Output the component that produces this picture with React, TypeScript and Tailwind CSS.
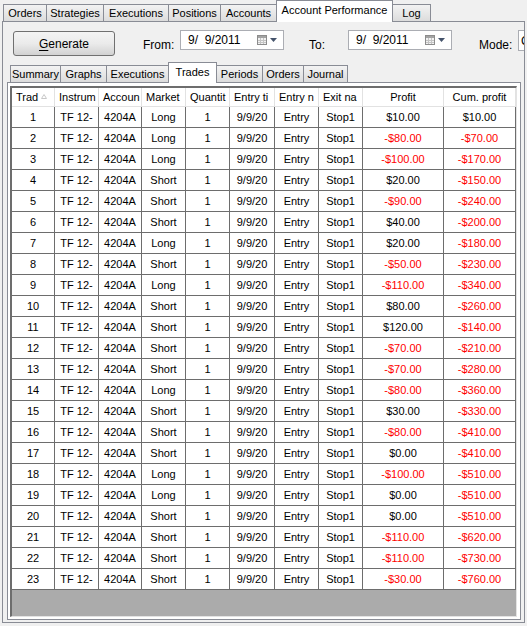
import React from 'react';

interface Trade {
  id: number;
  market: 'Long' | 'Short';
  profit: number;
  cum: number;
}

const trades: Trade[] = [
  { id: 1, market: 'Long', profit: 10, cum: 10 },
  { id: 2, market: 'Long', profit: -80, cum: -70 },
  { id: 3, market: 'Long', profit: -100, cum: -170 },
  { id: 4, market: 'Short', profit: 20, cum: -150 },
  { id: 5, market: 'Short', profit: -90, cum: -240 },
  { id: 6, market: 'Short', profit: 40, cum: -200 },
  { id: 7, market: 'Long', profit: 20, cum: -180 },
  { id: 8, market: 'Short', profit: -50, cum: -230 },
  { id: 9, market: 'Long', profit: -110, cum: -340 },
  { id: 10, market: 'Short', profit: 80, cum: -260 },
  { id: 11, market: 'Short', profit: 120, cum: -140 },
  { id: 12, market: 'Short', profit: -70, cum: -210 },
  { id: 13, market: 'Short', profit: -70, cum: -280 },
  { id: 14, market: 'Long', profit: -80, cum: -360 },
  { id: 15, market: 'Short', profit: 30, cum: -330 },
  { id: 16, market: 'Short', profit: -80, cum: -410 },
  { id: 17, market: 'Short', profit: 0, cum: -410 },
  { id: 18, market: 'Long', profit: -100, cum: -510 },
  { id: 19, market: 'Long', profit: 0, cum: -510 },
  { id: 20, market: 'Short', profit: 0, cum: -510 },
  { id: 21, market: 'Short', profit: -110, cum: -620 },
  { id: 22, market: 'Short', profit: -110, cum: -730 },
  { id: 23, market: 'Short', profit: -30, cum: -760 },
];

const money = (v: number) => (v < 0 ? `-$${Math.abs(v).toFixed(2)}` : `$${v.toFixed(2)}`);

const topTabs = [
  { label: 'Orders', w: 'w-[44px]' },
  { label: 'Strategies', w: 'w-[58px]' },
  { label: 'Executions', w: 'w-[66px]' },
  { label: 'Positions', w: 'w-[53px]' },
  { label: 'Accounts', w: 'w-[57px]' },
  { label: 'Account Performance', w: 'w-[117px]', active: true },
  { label: 'Log', w: 'w-[39px]' },
];

const subTabs = [
  { label: 'Summary', w: 'w-[51px]' },
  { label: 'Graphs', w: 'w-[47px]' },
  { label: 'Executions', w: 'w-[63px]' },
  { label: 'Trades', w: 'w-[49px]', active: true },
  { label: 'Periods', w: 'w-[47px]' },
  { label: 'Orders', w: 'w-[42px]' },
  { label: 'Journal', w: 'w-[45px]' },
];

const columns = ['Trad', 'Instrum', 'Accoun', 'Market', 'Quantit', 'Entry ti', 'Entry n', 'Exit na', 'Profit', 'Cum. profit'];

const gridCols = 'grid grid-cols-[43px_44px_43px_44px_44px_45px_44px_44px_81px_72px]';

const Tab = ({ label, w, active, tall }: { label: string; w: string; active?: boolean; tall: string }) => (
  <div
    className={
      active
        ? `${w} ${tall} relative z-10 -mb-px -ml-px flex shrink-0 items-center justify-center border border-b-0 border-[#898c95] bg-white pb-[2px] whitespace-nowrap`
        : `${w} -ml-px flex shrink-0 items-center justify-center border border-b-0 border-[#898c95] bg-linear-to-b from-[#f3f3f3] to-[#dcdcdc] whitespace-nowrap first:ml-0`
    }
  >
    {label}
  </div>
);

const CalendarIcon = () => (
  <div className="flex items-center gap-[3px]">
    <svg width="10" height="10" viewBox="0 0 10 10">
      <rect x="0.5" y="0.5" width="9" height="9" fill="#f2f2f2" stroke="#8c8c8c" />
      <rect x="1" y="1" width="8" height="2" fill="#a3a3a3" />
      <path d="M3.5 3v6M6.5 3v6M1 5.5h8M1 7.5h8" stroke="#c4c4c4" strokeWidth="1" />
    </svg>
    <svg width="7" height="4" viewBox="0 0 7 4">
      <path d="M0 0h7L3.5 4z" fill="#44536b" />
    </svg>
  </div>
);

const DateBox = () => (
  <div className="-mt-px flex h-[20px] w-[104px] shrink-0 items-center border border-[#abadb3] bg-white pl-[7px] pr-[6px]">
    <span className="flex-1 whitespace-pre text-[12px]">9/  9/2011</span>
    <CalendarIcon />
  </div>
);

const SortGlyph = () => (
  <svg width="6" height="5" viewBox="0 0 6 5" className="ml-[3px] mt-[-2px]">
    <path d="M0.5 4.5L3 0.5L5.5 4.5z" fill="none" stroke="#c8c8c8" strokeWidth="1" />
  </svg>
);

export default function App() {
  return (
    <div className="h-[626px] w-[527px] overflow-hidden bg-[#f0f0f0] font-['Liberation_Sans',Arial,sans-serif] text-[11px] text-black">
      {/* main tab strip */}
      <div className="flex h-[21px] items-end pl-[3px]">
        {topTabs.map((t) => (
          <Tab key={t.label} label={t.label} w={t.w} active={t.active} tall="h-[22px]" />
        ))}
      </div>
      <div className="ml-[2px] flex h-[602px] w-[523px] flex-col overflow-hidden border border-[#898c95] bg-[#f0f0f0]">
        {/* toolbar */}
        <div className="mt-[9px] flex h-[25px] shrink-0 items-start">
          <button className="ml-[10px] h-[25px] w-[102px] shrink-0 rounded-[3px] border border-[#707070] bg-linear-to-b from-[#f4f4f4] via-[#ebebeb] to-[#d2d2d2] text-[12px]">
            <span className="underline underline-offset-2">G</span>enerate
          </button>
          <span className="mt-[5px] w-[65px] shrink-0 pl-[28px] text-[12px]">From:</span>
          <DateBox />
          <span className="mt-[5px] w-[64px] shrink-0 pl-[25px] text-[12px]">To:</span>
          <DateBox />
          <span className="mt-[5px] w-[66px] shrink-0 pl-[27px] text-[12px]">Mode:</span>
          <div className="-mt-px flex h-[21px] w-[100px] shrink-0 items-center border border-[#abadb3] bg-white pl-[2px] text-[12px]">
            Currency
          </div>
        </div>
        {/* sub tabs */}
        <div className="mt-[6px] flex h-[20px] shrink-0 items-end pl-[7px]">
          {subTabs.map((t) => (
            <Tab key={t.label} label={t.label} w={t.w} active={t.active} tall="h-[21px]" />
          ))}
        </div>
        <div className="ml-[4px] h-[538px] w-[514px] shrink-0 border border-[#898c95] bg-white pl-[2px] pt-[3px]">
          {/* trades grid */}
          <div className="flex h-[531px] w-[507px] flex-col overflow-hidden border-b border-l-2 border-r border-t-2 border-b-[#e3e3e3] border-l-[#6d6d6d] border-r-[#e3e3e3] border-t-[#6d6d6d] bg-[#ababab]">
            <div className={`${gridCols} h-[19px] shrink-0 bg-white`}>
              {columns.map((c, i) => (
                <div
                  key={c}
                  className={`flex items-center overflow-hidden whitespace-nowrap border-b border-r border-[#e2e2e2] ${
                    i >= 8 ? 'justify-center' : 'pl-[4px]'
                  }`}
                >
                  {c}
                  {i === 0 && <SortGlyph />}
                </div>
              ))}
            </div>
            {trades.map((t) => {
              const cells = [
                String(t.id),
                'TF 12-',
                '4204A',
                t.market,
                '1',
                '9/9/20',
                'Entry',
                'Stop1',
                money(t.profit),
                money(t.cum),
              ];
              return (
                <div key={t.id} className={`${gridCols} h-[21px] shrink-0 bg-white`}>
                  {cells.map((v, i) => {
                    const red = (i === 8 && t.profit < 0) || (i === 9 && t.cum < 0);
                    return (
                      <div
                        key={i}
                        className={`flex items-center justify-center overflow-hidden whitespace-nowrap border-b border-r border-[#6d6d6d] ${
                          red ? 'text-[#ff0000]' : ''
                        }`}
                      >
                        {v}
                      </div>
                    );
                  })}
                </div>
              );
            })}
          </div>
        </div>
      </div>
    </div>
  );
}
